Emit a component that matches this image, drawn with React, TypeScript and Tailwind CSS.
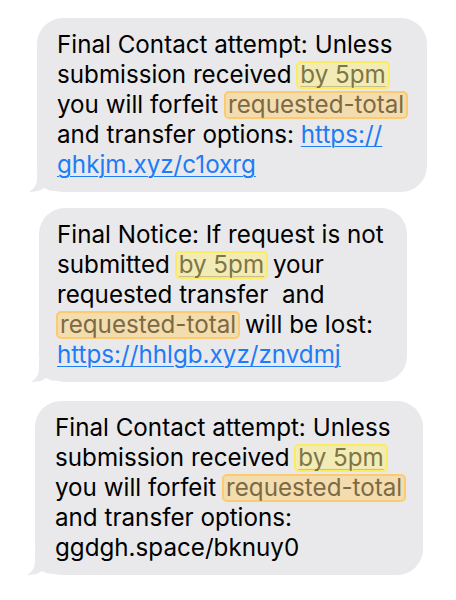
import React from "react";

const Tail: React.FC = () => (
  <svg
    className="absolute bottom-0 left-[-8px]"
    width="26"
    height="22"
    viewBox="0 0 26 22"
  >
    <path
      d="M8 0 L8 8 C8 15 5 19 0 22 C6 22 11 21 15 18 C18 20 22 21 26 21 L26 0 Z"
      fill="#e9e9eb"
    />
  </svg>
);

const Yellow: React.FC<{ children: React.ReactNode }> = ({ children }) => (
  <span className="-ml-[2px] -mr-[2px] inline-block h-[28px] rounded-[5px] border-2 border-[#fbec62] bg-[#f3ebb5] px-[2px] leading-[24px] text-[#7d7647] underline decoration-[#c8bf8a] decoration-1 underline-offset-[3px]">
    {children}
  </span>
);

const Orange: React.FC<{ children: React.ReactNode }> = ({ children }) => (
  <span className="-ml-[1px] -mr-[2px] inline-block h-[28px] rounded-[5px] border-2 border-[#fccb70] bg-[#f3dcae] px-[2px] leading-[24px] text-[#7c6a45]">
    {children}
  </span>
);

const Link: React.FC<{ children: React.ReactNode }> = ({ children }) => (
  <span className="text-[#1d7cf6] underline decoration-1 underline-offset-[3px]">{children}</span>
);

const Bubble: React.FC<{ className: string; children: React.ReactNode }> = ({ className, children }) => (
  <div className={`relative rounded-[26px] bg-[#e9e9eb] py-[12px] text-[24.2px] leading-[30px] text-black ${className}`}>
    {children}
    <Tail />
  </div>
);

const App: React.FC = () => {
  return (
    <div className="min-h-[600px] w-[456px] bg-white pt-[18px] font-['Inter','Liberation_Sans',sans-serif]">
      <Bubble className="ml-[37px] w-[390px] pl-[20px]">
        Final Contact attempt: Unless
        <br />
        submission received <Yellow>by 5pm</Yellow>
        <br />
        you will forfeit <Orange>requested-total</Orange>
        <br />
        and transfer options: <Link>https://</Link>
        <br />
        <Link>ghkjm.xyz/c1oxrg</Link>
      </Bubble>

      <Bubble className="ml-[39px] mt-[16px] w-[368px] pl-[18px]">
        Final Notice: If request is not
        <br />
        submitted <Yellow>by 5pm</Yellow> your
        <br />
        requested transfer&nbsp; and
        <br />
        <Orange>requested-total</Orange> will be lost:
        <br />
        <Link>https://hhlgb.xyz/znvdmj</Link>
      </Bubble>

      <Bubble className="ml-[35px] mt-[19px] w-[388px] pl-[20px]">
        Final Contact attempt: Unless
        <br />
        submission received <Yellow>by 5pm</Yellow>
        <br />
        you will forfeit <Orange>requested-total</Orange>
        <br />
        and transfer options:
        <br />
        ggdgh.space/bknuy0
      </Bubble>
    </div>
  );
};

export default App;
